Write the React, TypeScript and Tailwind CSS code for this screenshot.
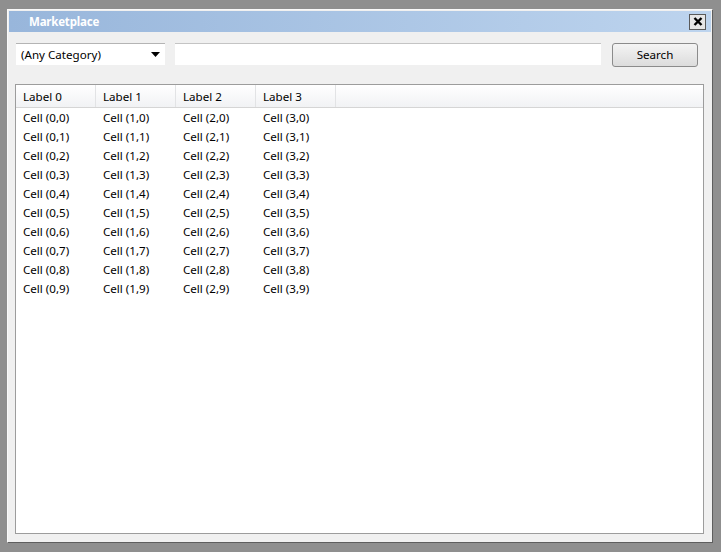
import React from "react";

const columns = ["Label 0", "Label 1", "Label 2", "Label 3"];
const rows = Array.from({ length: 10 }, (_, r) => r);

const App: React.FC = () => {
  return (
    <div
      className="w-[721px] h-[552px] bg-[#8f8f8f] pt-[9px] pl-[7px] text-[11.6px] text-black"
      style={{ fontFamily: '"Noto Sans", "Open Sans", sans-serif' }}
    >
      <div className="w-[706px] h-[534px] bg-[#f0f0f0] border-t border-l border-[#fafafa] border-r border-b border-r-[#5e5e5e] border-b-[#5e5e5e] p-px flex flex-col">
        {/* title bar */}
        <div className="h-[21px] bg-gradient-to-r from-[#98b6db] to-[#bdd4ee] flex items-center justify-between pl-[20px] pr-[5px]">
          <span className="text-white font-bold text-[11.5px] leading-none tracking-[-0.2px]">
            Marketplace
          </span>
          <div className="w-[17px] h-[16px] bg-[#e6e6e6] border border-[#5a5a5a] flex items-center justify-center">
            <svg width="10" height="9" viewBox="0 0 10 9">
              <path
                d="M1.5 1 L8.5 8 M8.5 1 L1.5 8"
                stroke="#000"
                strokeWidth="2.4"
              />
            </svg>
          </div>
        </div>

        {/* search row */}
        <div className="flex items-start mt-[11px] pl-[7px]">
          <div className="w-[149px] h-[22px] bg-white border-t border-[#b4b4b4] flex items-center justify-between pl-[5px] pr-[3px]">
            <span>(Any Category)</span>
            <svg width="9" height="5" viewBox="0 0 9 5" className="mr-[2px]">
              <path d="M0 0 H9 L4.5 5 Z" fill="#000" />
            </svg>
          </div>
          <div className="ml-[10px] w-[426px] h-[22px] bg-white border-t border-[#c4c4c4]" />
          <button className="ml-[11px] w-[86px] h-[24px] rounded-[3px] border border-[#8b8b8b] bg-gradient-to-b from-[#f4f4f4] to-[#dcdcdc] leading-none">
            Search
          </button>
        </div>

        {/* table */}
        <div className="mt-[17px] ml-[6px] w-[689px] h-[450px] bg-white border border-[#9c9c9c] flex flex-col">
          <div className="h-[23px] flex bg-gradient-to-b from-white to-[#f1f2f4] border-b border-[#d5d5d5]">
            {columns.map((c) => (
              <div
                key={c}
                className="w-[80px] pl-[7px] pt-px flex items-center border-r border-[#e2e3e5]"
              >
                {c}
              </div>
            ))}
          </div>
          <div className="flex flex-col">
            {rows.map((r) => (
              <div key={r} className="flex h-[19px] items-center">
                {columns.map((_, c) => (
                  <div key={c} className="w-[80px] pl-[7px]">
                    Cell ({c},{r})
                  </div>
                ))}
              </div>
            ))}
          </div>
        </div>
      </div>
    </div>
  );
};

export default App;
